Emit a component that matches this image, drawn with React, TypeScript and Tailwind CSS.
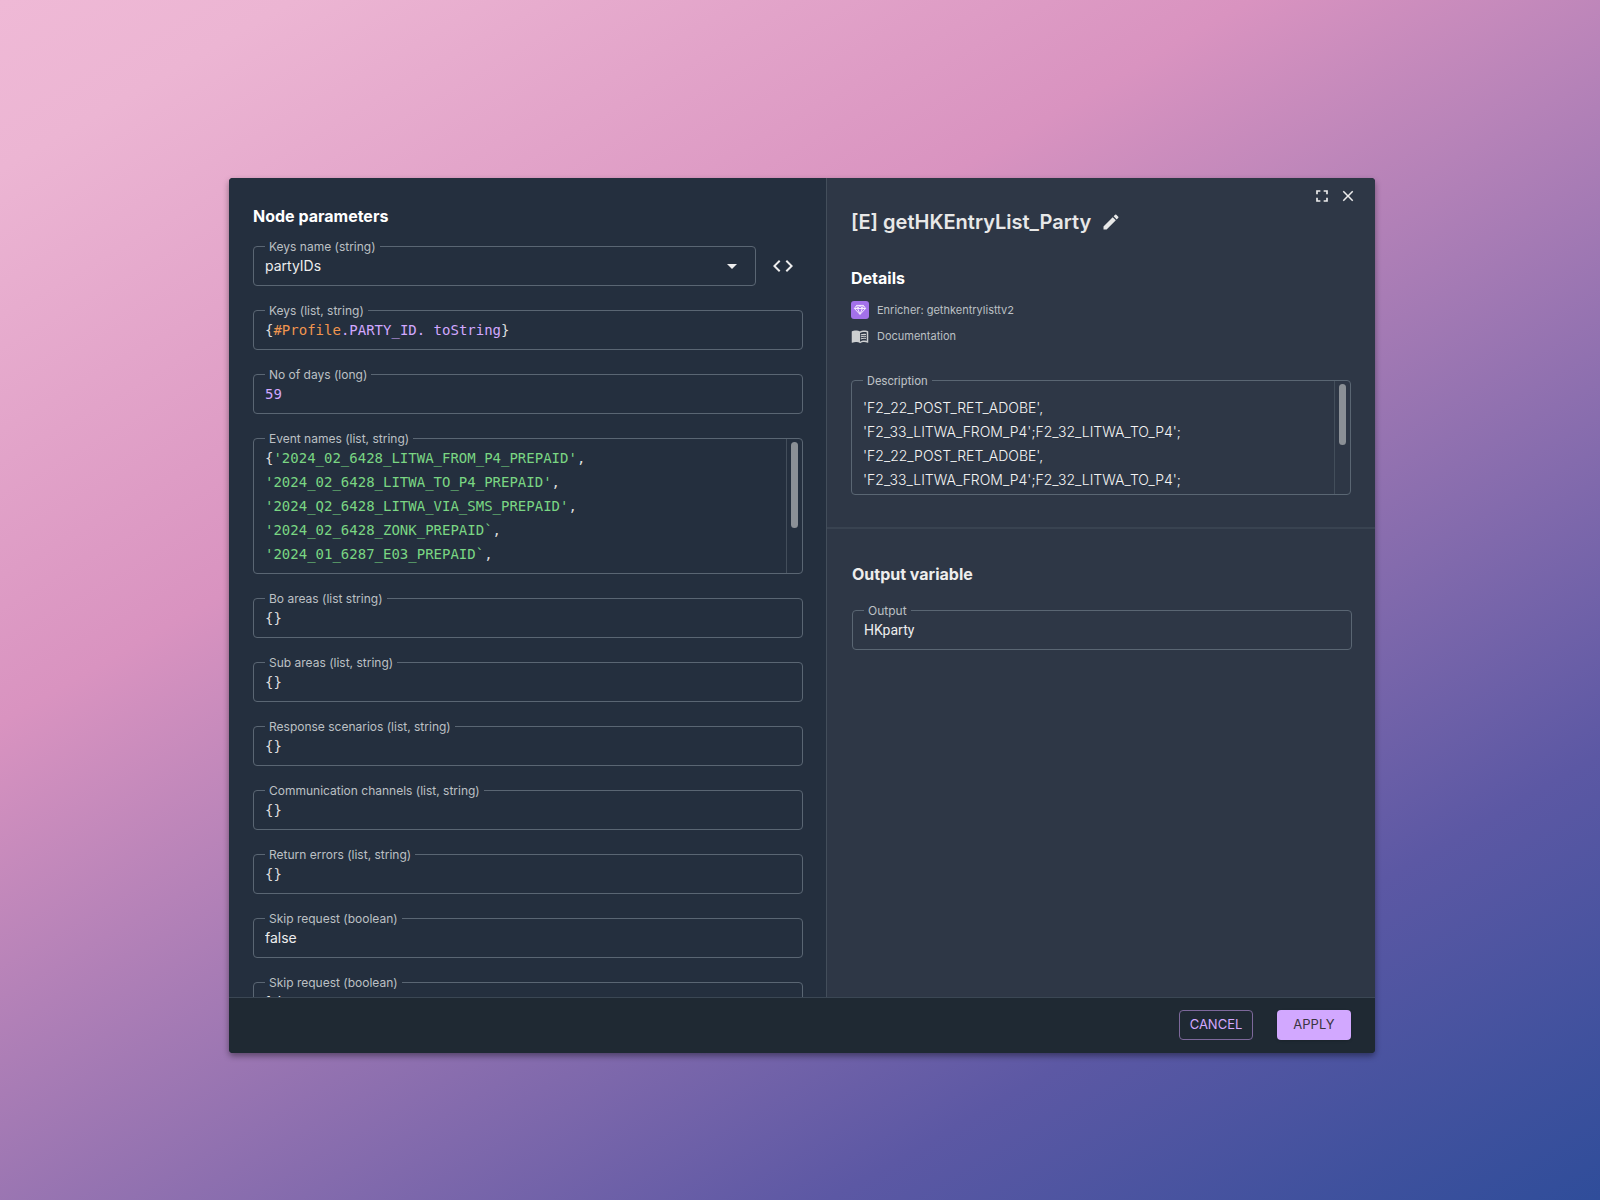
import React from "react";
import {
  MdArrowDropDown,
  MdClose,
  MdCode,
  MdEdit,
  MdFullscreen,
  MdMenuBook,
} from "react-icons/md";

const boxClass =
  "relative flex rounded border border-[#5a6673] focus-within:border-[#d2a8ff]";
const monoClass = "font-['DejaVu_Sans_Mono','Liberation_Mono',monospace]";
const robotoClass = "font-['Roboto',sans-serif]";

function FieldLabel({
  id,
  surface,
  font = "",
  children,
}: {
  id: string;
  surface: "left" | "right";
  font?: string;
  children: React.ReactNode;
}) {
  return (
    <label
      htmlFor={id}
      className={`absolute -top-2 left-[11px] px-1 text-xs leading-4 text-[#bcc0c4] ${font} ${
        surface === "left" ? "bg-[#242f3e]" : "bg-[#2e3746]"
      }`}
    >
      {children}
    </label>
  );
}

function TextField({
  id,
  label,
  value,
  tone = "text-[#ededed]",
  font = "pb-0.5",
  surface = "left",
}: {
  id: string;
  label: string;
  value: string;
  tone?: string;
  font?: string;
  surface?: "left" | "right";
}) {
  return (
    <div className={boxClass}>
      <FieldLabel id={id} surface={surface}>
        {label}
      </FieldLabel>
      <input
        id={id}
        type="text"
        defaultValue={value}
        className={`h-[38px] w-full min-w-0 bg-transparent px-[11px] text-sm outline-none ${tone} ${font}`}
      />
    </div>
  );
}

function Scrollbar({ thumb }: { thumb: string }) {
  return (
    <div
      aria-hidden="true"
      className="flex w-4 shrink-0 justify-center border-l border-[#434e5b] pt-[3px]"
    >
      <div className={`w-[7px] rounded-full bg-[#8b9096] ${thumb}`} />
    </div>
  );
}

const events = [
  "'2024_02_6428_LITWA_FROM_P4_PREPAID'",
  "'2024_02_6428_LITWA_TO_P4_PREPAID'",
  "'2024_Q2_6428_LITWA_VIA_SMS_PREPAID'",
  "'2024_02_6428_ZONK_PREPAID`",
  "'2024_01_6287_E03_PREPAID`",
];

/* Highlighted code sits beneath a transparent, editable layer in one grid cell. */
function CodeField({
  id,
  label,
  value,
  rows,
  thumb,
  children,
}: {
  id: string;
  label: string;
  value: string;
  rows: number;
  thumb?: string;
  children: React.ReactNode;
}) {
  return (
    <div className={boxClass}>
      <FieldLabel id={id} surface="left">
        {label}
      </FieldLabel>
      <div className={`grid min-w-0 flex-1 text-sm leading-6 ${monoClass}`}>
        <pre
          aria-hidden="true"
          className="col-start-1 row-start-1 overflow-hidden px-[11px] py-[7px] text-[#dedede] [font-family:inherit]"
        >
          {children}
        </pre>
        <textarea
          id={id}
          rows={rows}
          spellCheck={false}
          defaultValue={value}
          className="col-start-1 row-start-1 resize-none overflow-hidden bg-transparent px-[11px] py-[7px] whitespace-pre text-transparent caret-white outline-none"
        />
      </div>
      {thumb && <Scrollbar thumb={thumb} />}
    </div>
  );
}

function GemIcon() {
  return (
    <svg
      viewBox="0 0 18 18"
      className="size-[18px] rounded-[3px] bg-[#a371ea]"
      fill="none"
      stroke="#f3eafd"
      strokeWidth="1"
      strokeLinejoin="round"
      aria-hidden="true"
    >
      <path d="M5.6 4.4h6.8l2.2 3.1L9 13.4 3.4 7.5z" />
      <path d="M3.4 7.5h11.2M5.6 4.4l1 3.1L9 4.4l2.4 3.1 1-3.1M6.6 7.5 9 13.2l2.4-5.7" />
    </svg>
  );
}

const description = [
  "'F2_22_POST_RET_ADOBE',",
  "'F2_33_LITWA_FROM_P4';F2_32_LITWA_TO_P4';",
  "'F2_22_POST_RET_ADOBE',",
  "'F2_33_LITWA_FROM_P4';F2_32_LITWA_TO_P4';",
].join("\n");

const listFields = [
  { id: "bo-areas", label: "Bo areas (list string)" },
  { id: "sub-areas", label: "Sub areas (list, string)" },
  { id: "response-scenarios", label: "Response scenarios (list, string)" },
  { id: "communication-channels", label: "Communication channels (list, string)" },
  { id: "return-errors", label: "Return errors (list, string)" },
];

export default function App() {
  return (
    <div className="flex min-h-screen items-center justify-center bg-[linear-gradient(150deg,#efb9d6_0%,#ecb5d3_8%,#d993c0_34%,#5c58a4_79%,#2f4d9a_100%)] pt-[31px] pr-10 pl-11 font-['Inter',sans-serif] [font-optical-sizing:none]">
      <div
        role="dialog"
        aria-labelledby="dialog-title"
        className="flex w-full max-w-[1146px] flex-col overflow-hidden rounded bg-[#1f2933] shadow-[0_3px_6px_rgba(0,0,0,0.4)]"
      >
        <div className="grid h-[820px] grid-cols-[597fr_549fr] border-b border-[#3b4754]">
          <section className="flex min-h-0 flex-col overflow-hidden bg-[#242f3e] pt-[26px] pr-[23px] pl-6">
            <h2 className="text-base leading-6 font-bold text-white">Node parameters</h2>
            <div className="mt-[18px] flex flex-col gap-6">
              <div className="flex items-center gap-[7px]">
                <div className={`${boxClass} flex-1 items-center`}>
                  <FieldLabel id="keys-name" surface="left">
                    Keys name (string)
                  </FieldLabel>
                  <select
                    id="keys-name"
                    className="h-[38px] w-full appearance-none bg-transparent px-[11px] text-sm text-[#ededed] outline-none"
                  >
                    <option>partyIDs</option>
                  </select>
                  <MdArrowDropDown
                    aria-hidden="true"
                    className="pointer-events-none absolute right-[11px] size-6 text-[#ededed]"
                  />
                </div>
                <button
                  type="button"
                  aria-label="Switch to expression editor"
                  className="flex size-10 items-center justify-center text-[#ededed]"
                >
                  <MdCode className="size-6" />
                </button>
              </div>

              <CodeField
                id="keys"
                label="Keys (list, string)"
                value="{#Profile.PARTY_ID. toString}"
                rows={1}
              >
                {"{"}
                <span className="text-[#f0954f]">#Profile</span>
                <span className="text-[#d2a8ff]">.PARTY_ID. toString</span>
                {"}"}
              </CodeField>

              <TextField
                id="days"
                label="No of days (long)"
                value="59"
                tone="text-[#d2a8ff]"
                font={monoClass}
              />

              <CodeField
                id="events"
                label="Event names (list, string)"
                value={"{" + events.join(",\n") + ","}
                rows={5}
                thumb="h-[86px]"
              >
                {events.map((name, i) => (
                  <React.Fragment key={name}>
                    {i === 0 ? "{" : "\n"}
                    <span className="text-[#7ad683]">{name}</span>,
                  </React.Fragment>
                ))}
              </CodeField>

              {listFields.map((f) => (
                <TextField
                  key={f.id}
                  id={f.id}
                  label={f.label}
                  value="{}"
                  tone="text-[#dedede]"
                  font={monoClass}
                />
              ))}
              <TextField id="skip-1" label="Skip request (boolean)" value="false" />
              <TextField id="skip-2" label="Skip request (boolean)" value="false" />
            </div>
          </section>

          <section className="flex flex-col border-l border-[#434e5b] bg-[#2e3746]">
            <div className="border-b-2 border-[#394351] px-6 pt-2 pb-8">
              <div className="-mr-1.5 flex h-5 items-center justify-end gap-[7px] text-[#ededed]">
                <button type="button" aria-label="Full screen">
                  <MdFullscreen className="size-5" />
                </button>
                <button type="button" aria-label="Close">
                  <MdClose className="size-[18px]" />
                </button>
              </div>
              <div className="flex items-center gap-2.5 text-[#e8e8e8]">
                <h1 id="dialog-title" className="text-xl leading-8 font-semibold">
                  [E] getHKEntryList_Party
                </h1>
                <button type="button" aria-label="Edit name">
                  <MdEdit className="size-5" />
                </button>
              </div>
              <h2 className="mt-7 text-base leading-6 font-bold text-white">Details</h2>
              <div className="mt-[11px] flex flex-col gap-2 text-[11px] leading-[18px] text-[#bcc0c4]">
                <p className="flex items-center gap-2">
                  <GemIcon />
                  Enricher: gethkentrylisttv2
                </p>
                <a href="#documentation" className="flex items-center gap-2">
                  <MdMenuBook className="size-[18px] text-[#cdcfd1]" aria-hidden="true" />
                  Documentation
                </a>
              </div>
              <div className={`${boxClass} mt-[35px]`}>
                <FieldLabel id="description" surface="right" font={robotoClass}>
                  Description
                </FieldLabel>
                <textarea
                  id="description"
                  spellCheck={false}
                  defaultValue={description}
                  className="h-[113px] min-w-0 flex-1 resize-none overflow-hidden bg-transparent px-[11px] pt-[15px] text-sm leading-6 font-light text-[#f4f4f4] outline-none"
                />
                <Scrollbar thumb="h-[61px]" />
              </div>
            </div>

            <div className="pt-[33px] pr-[23px] pl-[25px]">
              <h2 className="mb-6 text-base leading-6 font-bold text-[#ededed]">Output variable</h2>
              <TextField
                id="output"
                label="Output"
                value="HKparty"
                surface="right"
                font={robotoClass}
              />
            </div>
          </section>
        </div>

        <footer className="flex justify-end gap-6 bg-[#1f2933] px-6 pt-3 pb-[13px] text-[13px]">
          <button
            type="button"
            className="h-[30px] w-[74px] rounded border border-[#7d689b] text-[#d2a8ff]"
          >
            CANCEL
          </button>
          <button
            type="button"
            className="h-[30px] w-[74px] rounded bg-[#d2a8ff] text-[#3a3541] shadow-sm"
          >
            APPLY
          </button>
        </footer>
      </div>
    </div>
  );
}
